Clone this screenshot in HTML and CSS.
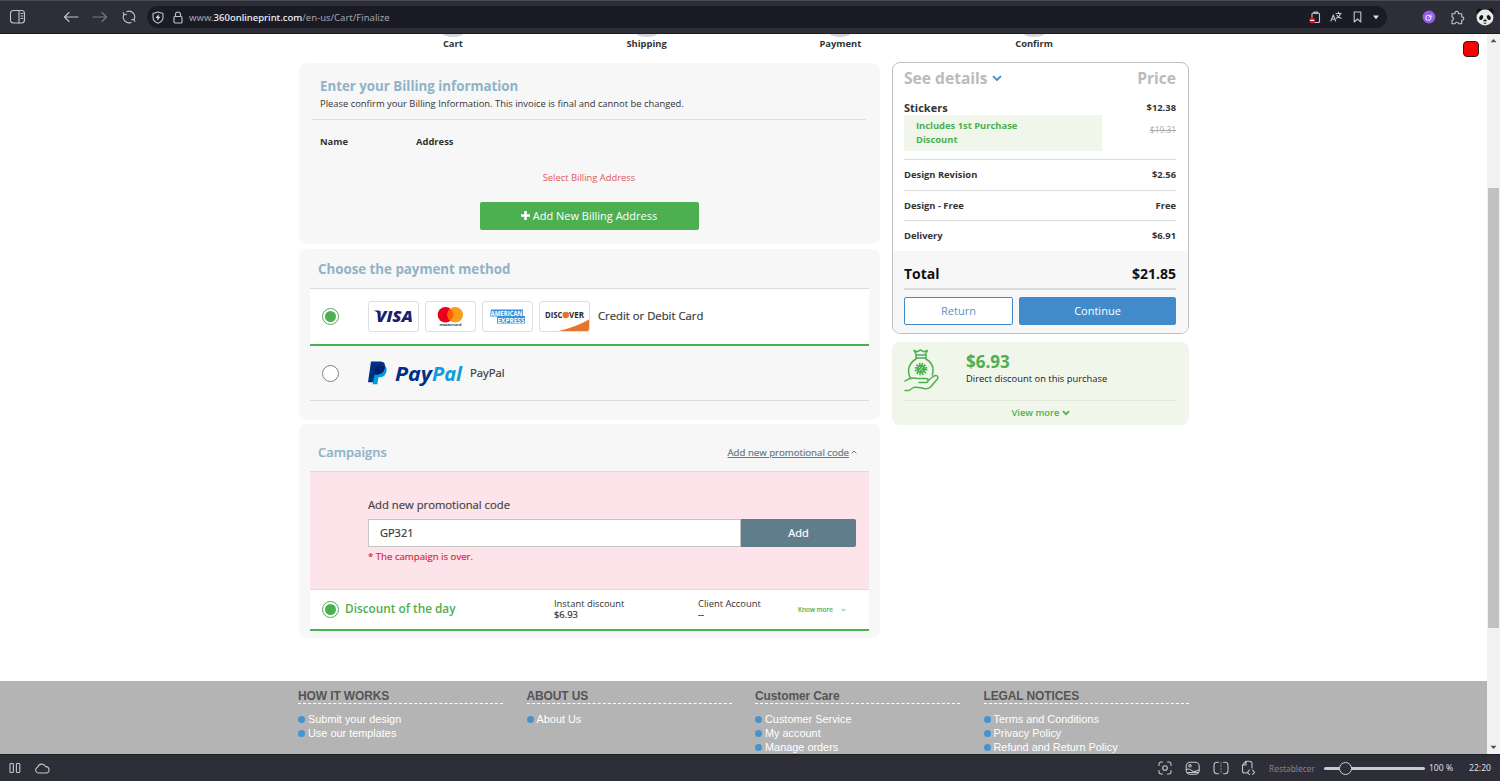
FILE: index.html
```html
<!DOCTYPE html>
<html lang="en">
<head>
    <meta charset="utf-8">
    <title>360onlineprint - Finalize</title>
    <link rel="stylesheet" href="styles.css">
</head>
<body>
    <header class="toolbar">
        <svg class="icon panel-icon" width="18" height="16" viewBox="0 0 18 16"><rect x="1.5" y="1.5" width="14" height="12.5" rx="3"/><path d="M10 1.5V14M12 4.5h2M12 7h2M12 9.5h2"/></svg>
        <svg class="icon back-icon" width="16" height="12" viewBox="0 0 16 12"><path d="M15 6H1.5M6 1.5L1.5 6L6 10.5"/></svg>
        <svg class="icon forward-icon" width="16" height="12" viewBox="0 0 16 12"><path d="M1 6h13.5M10 1.5L14.5 6L10 10.5"/></svg>
        <svg class="icon reload-icon" width="14" height="14" viewBox="0 0 14 14"><path d="M5 1.6A5.6 5.6 0 0 1 12 9.5M9 12.4A5.6 5.6 0 0 1 2 4.5M1.2 2.6L2 4.6L4.2 4.4M12.8 11.4L12 9.4L9.8 9.6"/></svg>
        <div class="address-bar">
            <svg class="icon" width="12" height="13" viewBox="0 0 12 13"><path d="M6 1L11 2.5V6.5C11 9.5 8.5 11.3 6 12.2C3.5 11.3 1 9.5 1 6.5V2.5Z"/><path class="solid" d="M6.8 3L3.6 7H5.6L5.2 9.8L8.4 5.8H6.4Z"/></svg>
            <svg class="icon lock-icon" width="10" height="13" viewBox="0 0 10 13"><rect x="1" y="5.5" width="8" height="6.5" rx="1"/><path d="M2.5 5.5V3.5a2.5 2.5 0 0 1 5 0v2"/></svg>
            <span class="url">www.<b>360onlineprint.com</b>/en-us/Cart/Finalize</span>
            <svg class="icon" width="12" height="13" viewBox="0 0 12 13"><rect x="3" y="2" width="7.5" height="9.5" rx="1"/><path d="M5 2V1h3.5v1.5H5"/><circle cx="3.2" cy="9.4" r="3" fill="#d80b18" stroke="none"/><path d="M1.7 9.4h3" stroke="#fff" stroke-width="1.2"/></svg>
            <svg class="icon translate-icon" width="12" height="12" viewBox="0 0 12 12"><path d="M1 10L3.3 4L5.6 10M1.8 8.2h3M6 2.5h5.2M8.6 1v1.5M10.5 2.5C10 5 8 6.5 6.3 7.2M7 4.2C8 5.8 9.5 6.8 11.2 7.2"/></svg>
            <svg class="icon bookmark-icon" width="9" height="12" viewBox="0 0 9 12"><path d="M1.2 1h6.6v10L4.5 8L1.2 11Z"/></svg>
            <svg class="icon caret-icon" width="8" height="5" viewBox="0 0 8 5"><path class="solid" d="M1 .5h6L4 4.2Z"/></svg>
        </div>
        <svg class="ext-icon" width="14" height="14" viewBox="0 0 14 14"><circle cx="7" cy="7" r="6.4" fill="#8f5fe8"/><circle cx="6.3" cy="7.8" r="2.5" fill="none" stroke="#e5d9ff" stroke-width="1.1"/><path d="M6.3 7.8L9.8 4.4M8.5 7.2L10.6 6" stroke="#e5d9ff" fill="none"/></svg>
        <svg class="icon puzzle-icon" width="15" height="15" viewBox="0 0 15 15"><path d="M2 3.7h3a1.8 1.8 0 1 1 3.4 0h3.3v3.2a1.7 1.7 0 1 1 0 3.3v3.5H8.6a1.8 1.8 0 0 0-3.5 0H2v-3.3a1.8 1.8 0 0 0 0-3.5Z"/></svg>
        <svg class="panda" width="18" height="18" viewBox="0 0 18 18"><circle cx="3.5" cy="3.5" r="3" fill="#111"/><circle cx="14.5" cy="3.5" r="3" fill="#111"/><ellipse cx="9" cy="9.5" rx="8.4" ry="7.9" fill="#e9ebe9"/><ellipse cx="5.2" cy="9.5" rx="1.8" ry="2.6" transform="rotate(30 5.2 9.5)" fill="#151515"/><ellipse cx="12.8" cy="9.5" rx="1.8" ry="2.6" transform="rotate(-30 12.8 9.5)" fill="#151515"/><ellipse cx="9" cy="12.5" rx="1.7" ry="1.1" fill="#151515"/><path d="M7.5 15q1.5.8 3 0" stroke="#333" fill="none"/></svg>
    </header>

    <div class="viewport">
        <main class="page">
            <div class="marker"></div>
            <div class="steps">
                <div class="step">Cart</div>
                <div class="step">Shipping</div>
                <div class="step">Payment</div>
                <div class="step">Confirm</div>
            </div>

            <div class="content">
                <div class="left">
                    <section class="card billing">
                        <h2>Enter your Billing information</h2>
                        <p class="note">Please confirm your Billing Information. This invoice is final and cannot be changed.</p>
                        <div class="billing-head">
                            <span class="name">Name</span>
                            <span>Address</span>
                        </div>
                        <p class="billing-error">Select Billing Address</p>
                        <button class="btn-green"><svg width="9" height="9" viewBox="0 0 9 9"><path d="M4.5 0v9M0 4.5h9" stroke="#fff" stroke-width="2.6"/></svg><span>Add New Billing Address</span></button>
                    </section>

                    <section class="card payment">
                        <h2>Choose the payment method</h2>
                        <div class="method selected">
                            <span class="radio checked"></span>
                            <div class="logos">
                                <svg class="logo" viewBox="1 1 49 29"><path d="M6 9.5h5l2 4Z" fill="#1b1f71"/><text x="8" y="21.3" font-size="16" font-weight="800" font-style="italic" textLength="37" lengthAdjust="spacingAndGlyphs" fill="#1b1f71">VISA</text></svg>
                                <svg class="logo" viewBox="1 1 49 29"><circle cx="20.5" cy="13.7" r="7.8" fill="#eb001b"/><circle cx="30.2" cy="13.7" r="7.8" fill="#f79e1b"/><path d="M25.3 7.6a7.8 7.8 0 0 1 0 12.2a7.8 7.8 0 0 1 0-12.2" fill="#ff5f00"/><text x="14.5" y="25.3" font-size="4" font-weight="700" textLength="22" fill="#444">mastercard</text></svg>
                                <svg class="logo amex" viewBox="1 1 49 29"><path d="M9 8.5h32v6.5h2v7.5H15v-7H8Z" fill="#3c92dc"/><text x="8.5" y="14.5" font-size="6.6" font-weight="700" textLength="32" lengthAdjust="spacingAndGlyphs" fill="#fff">AMERICAN</text><text x="15.5" y="21.8" font-size="6.6" font-weight="700" textLength="27" lengthAdjust="spacingAndGlyphs" fill="#fff">EXPRESS</text></svg>
                                <svg class="logo" viewBox="1 1 49 29"><path d="M15 31Q36 27 51 18V31Z" fill="#e5752b"/><text x="6" y="17" font-size="8.6" font-weight="700" textLength="17.5" lengthAdjust="spacingAndGlyphs" fill="#2c2c30">DISC</text><circle cx="26.8" cy="14" r="3.3" fill="#e97228"/><text x="30" y="17" font-size="8.6" font-weight="700" textLength="15" lengthAdjust="spacingAndGlyphs" fill="#2c2c30">VER</text></svg>
                            </div>
                            <span class="method-name">Credit or Debit Card</span>
                        </div>
                        <div class="method">
                            <span class="radio"></span>
                            <svg class="paypal" width="95" height="26" viewBox="0 0 95 26"><path d="M6 8L16.5 5.5C19.5 7.5 19 11 17.5 14C16 16.8 13.5 17.3 10.5 17.3L9.3 24.3H4.7Z" fill="#009cde"/><path d="M3 1.5H11.5C16 1.5 17.6 3.5 16.8 7.5C16 12 13 14.5 8.5 14.5H6.5L5 22.3H0Z" fill="#012f86"/><path d="M7.5 6.3Q12 5 16.8 6.5C16.8 12 13 14.5 8.5 14.5H6.2Z" fill="#012169"/><text y="20.7" font-size="19" font-weight="700" font-style="italic"><tspan x="27" textLength="37" lengthAdjust="spacingAndGlyphs" fill="#012f86">Pay</tspan><tspan x="64" textLength="30" lengthAdjust="spacingAndGlyphs" fill="#129bdb">Pal</tspan></text></svg>
                            <span class="method-name">PayPal</span>
                        </div>
                    </section>

                    <section class="card campaigns">
                        <div class="campaigns-head">
                            <h2>Campaigns</h2>
                            <a class="promo-link">Add new promotional code</a>
                            <svg width="6" height="4" viewBox="0 0 6 4"><path d="M.6 3.4L3 1L5.4 3.4" fill="none" stroke="#607d8b"/></svg>
                        </div>
                        <div class="promo">
                            <label for="code">Add new promotional code</label>
                            <div class="promo-row">
                                <input type="text" id="code" value="GP321">
                                <button class="btn-add">Add</button>
                            </div>
                            <p class="promo-error">* The campaign is over.</p>
                        </div>
                        <div class="discount">
                            <span class="radio checked"></span>
                            <span class="discount-name">Discount of the day</span>
                            <div class="discount-col instant">Instant discount<br><b>$6.93</b></div>
                            <div class="discount-col client">Client Account<br><b>--</b></div>
                            <span class="know-more">Know more</span>
                            <svg width="5" height="4" viewBox="0 0 5 4"><path d="M.7 1L2.5 2.8L4.3 1" fill="none" stroke="#4caf50"/></svg>
                        </div>
                    </section>
                </div>

                <aside class="right">
                    <section class="summary">
                        <div class="summary-head">
                            <span>See details<svg width="10" height="7" viewBox="0 0 10 7"><path d="M1 1.2L5 5L9 1.2" fill="none" stroke="#428bca" stroke-width="1.8"/></svg></span>
                            <span>Price</span>
                        </div>
                        <div class="product">
                            <div>
                                <div class="product-name">Stickers</div>
                                <div class="product-tag">Includes 1st Purchase<br>Discount</div>
                            </div>
                            <div class="product-price">$12.38<s>$19.31</s></div>
                        </div>
                        <div class="line"><span>Design Revision</span><span>$2.56</span></div>
                        <div class="line"><span>Design - Free</span><span>Free</span></div>
                        <div class="line"><span>Delivery</span><span>$6.91</span></div>
                        <div class="summary-foot">
                            <div class="total"><span>Total</span><span>$21.85</span></div>
                            <div class="actions">
                                <button class="btn-return">Return</button>
                                <button class="btn-continue">Continue</button>
                            </div>
                        </div>
                    </section>

                    <section class="saving">
                        <div class="saving-top">
                            <svg width="35" height="43" viewBox="0 0 35 43" fill="none" stroke="#4caf50" stroke-width="1.5" stroke-linejoin="round"><g stroke-linecap="round"><path d="M12.5 6L10 1.5L13 2.8L16.5 1L20 2.8L23.5 1.5L21 6M12 6h10M12 9h10M12 6v3M22 6v3M12.5 9.5C7 13 4.5 17 4.5 22Q4.5 26 6.5 29M21.5 9.5C27 13 29.5 17 29 22Q29 24 28.3 26"/><path d="M1 32Q7 27.5 13 29.5H22C25 29.5 24.5 33.5 22 33.5H15M24.8 31L30 27C32.5 25.5 35 27.5 33.3 30L27 37.5C25.5 39.5 23 40 20 39.5C15 38.5 13 37.5 9.5 38.5L5 41.5H1"/></g><circle cx="17" cy="20" r="5.2" stroke-width="2.4" stroke-dasharray="1.5 1.22"/><circle cx="17" cy="20" r="4.4" fill="#4caf50" stroke="none"/><path d="M18.8 18L15.2 22M14.8 18.3h1M18.2 21.7h1" stroke="#f1f6ea" stroke-width=".7"/></svg>
                            <div>
                                <div class="saving-amount">$6.93</div>
                                <div class="saving-text">Direct discount on this purchase</div>
                            </div>
                        </div>
                        <div class="view-more">View more<svg width="8" height="6" viewBox="0 0 8 6"><path d="M1 1.2L4 4.2L7 1.2" fill="none" stroke="#4caf50" stroke-width="1.7"/></svg></div>
                    </section>
                </aside>
            </div>

            <footer class="footer">
                <div class="footer-col">
                    <h3>HOW IT WORKS</h3>
                    <ul>
                        <li>Submit your design</li>
                        <li>Use our templates</li>
                    </ul>
                </div>
                <div class="footer-col">
                    <h3>ABOUT US</h3>
                    <ul>
                        <li>About Us</li>
                    </ul>
                </div>
                <div class="footer-col">
                    <h3>Customer Care</h3>
                    <ul>
                        <li>Customer Service</li>
                        <li>My account</li>
                        <li>Manage orders</li>
                    </ul>
                </div>
                <div class="footer-col">
                    <h3>LEGAL NOTICES</h3>
                    <ul>
                        <li>Terms and Conditions</li>
                        <li>Privacy Policy</li>
                        <li>Refund and Return Policy</li>
                    </ul>
                </div>
            </footer>
        </main>

        <div class="scrollbar">
            <svg width="7" height="5" viewBox="0 0 7 5"><path d="M.5 4.2L3.5 1L6.5 4.2Z" fill="#505050"/></svg>
            <div class="thumb"></div>
            <svg width="7" height="5" viewBox="0 0 7 5"><path d="M.5 .8L3.5 4L6.5 .8Z" fill="#505050"/></svg>
        </div>
    </div>

    <div class="statusbar">
        <svg class="icon" width="12" height="12" viewBox="0 0 12 12"><rect x="1" y="1.5" width="3.4" height="9" rx=".8"/><rect x="7.4" y="1.5" width="3.4" height="9" rx=".8"/></svg>
        <svg class="icon cloud-icon" width="16" height="12" viewBox="0 0 16 12"><path d="M4 11a3 3 0 0 1-.3-5.8A4.2 4.2 0 0 1 11.6 4.6A3.2 3.2 0 0 1 12 11Z"/></svg>
        <svg class="icon capture-icon" width="14" height="14" viewBox="0 0 14 14"><path d="M1 4.5V3.2A2.2 2.2 0 0 1 3.2 1H4.5M9.5 1h1.3A2.2 2.2 0 0 1 13 3.2V4.5M13 9.5v1.3A2.2 2.2 0 0 1 10.8 13H9.5M4.5 13H3.2A2.2 2.2 0 0 1 1 10.8V9.5"/><circle cx="7" cy="7" r="2.3"/></svg>
        <svg class="icon image-icon" width="16" height="15" viewBox="0 0 16 15"><rect x="1.2" y="1.2" width="13" height="12" rx="4"/><path d="M1.5 8.5C5 6.5 6.5 10 8.5 10.5S12.5 9 14 9M2.5 11.5h11"/><circle cx="5" cy="4.8" r="1.2"/></svg>
        <svg class="icon tile-icon" width="16" height="14" viewBox="0 0 16 14"><path d="M5.5 1.2H4A3 3 0 0 0 1 4.2v5.6a3 3 0 0 0 3 3h1.5M10.5 1.2H12a3 3 0 0 1 3 3v5.6a3 3 0 0 1-3 3h-1.5"/><path d="M8 1v12" stroke-dasharray="1.5 1.5" opacity=".5"/></svg>
        <svg class="icon code-icon" width="15" height="16" viewBox="0 0 15 16"><path d="M6 13H3.5A2 2 0 0 1 1.5 11V5L5 1.2h3.5A2.5 2.5 0 0 1 11 3.7V8M5 1.5V5H1.8M8.5 10L6.5 12.3L8.5 14.5M11.5 10l2 2.3l-2 2.2"/></svg>
        <span class="reset">Restablecer</span>
        <div class="slider"><div class="knob"></div></div>
        <span class="zoom">100 %</span>
        <span class="clock">22:20</span>
    </div>
</body>
</html>
```

FILE: styles.css
```css
* {
    box-sizing: border-box;
}

body {
    margin: 0;
    height: 781px;
    overflow: hidden;
    display: flex;
    flex-direction: column;
    font-family: "Open Sans", sans-serif;
    font-size: 9.4px;
    color: #333;
    background: #fff;
}

h2, h3, p, ul {
    margin: 0;
    padding: 0;
}

svg {
    flex: none;
    display: block;
}

button, input {
    font-family: inherit;
    padding: 0;
    border: 0;
}

/* Browser toolbar */
.toolbar {
    height: 34px;
    flex: none;
    display: flex;
    align-items: center;
    padding: 0 6px 0 9px;
    background: #2e2e38;
    border-top: 1px solid #4b4b54;
    border-bottom: 1px solid #1b1b23;
}

.icon {
    fill: none;
    stroke: #c3c3cb;
    stroke-width: 1.1;
    stroke-linecap: round;
    stroke-linejoin: round;
}

.icon .solid {
    fill: #e2e2e8;
    stroke: none;
}

.back-icon {
    margin-left: 36px;
}

.forward-icon {
    margin-left: 13px;
    opacity: 0.5;
}

.reload-icon {
    margin-left: 14px;
}

.address-bar {
    width: 1240px;
    height: 22px;
    margin-left: 11px;
    padding: 0 7px 0 5px;
    display: flex;
    align-items: center;
    border-radius: 11px;
    background: #1b1b25;
}

.lock-icon {
    margin-left: 9px;
}

.url {
    flex: 1;
    margin-left: 6px;
    font-family: "Noto Sans", sans-serif;
    font-size: 9.5px;
    color: #a4a4ad;
}

.url b {
    font-weight: 500;
    color: #f3f3f6;
}

.translate-icon {
    margin-left: 9px;
}

.bookmark-icon {
    margin-left: 11px;
}

.caret-icon {
    margin-left: 10px;
}

.ext-icon {
    margin-left: 35px;
}

.puzzle-icon {
    margin-left: 14px;
}

.panda {
    margin-left: 11px;
}

/* Page */
.viewport {
    height: 720px;
    flex: none;
    display: flex;
}

.page {
    position: relative;
    width: 1487px;
    overflow: hidden;
    display: flex;
    flex-direction: column;
}

.marker {
    position: absolute;
    top: 7px;
    left: 1463px;
    width: 16px;
    height: 16px;
    border: 1px solid #222;
    border-radius: 4px;
    background: #f00;
}

.steps {
    display: flex;
    width: 775px;
    margin-left: 356px;
    height: 29px;
    flex: none;
}

.step {
    flex: 1;
    text-align: center;
    font-weight: 700;
    line-height: 14px;
}

/* bottom edge of the step circle */
.step::before {
    content: "";
    display: block;
    width: 20px;
    height: 2.5px;
    margin: 0 auto;
    border-radius: 0 0 10px 10px / 0 0 3px 3px;
    background: #d4d4da;
}

.content {
    display: flex;
    gap: 12px;
    padding-left: 299px;
    height: 618px;
    flex: none;
}

.left {
    width: 581px;
}

.right {
    width: 297px;
    margin-top: -1px;
}

h2 {
    font-size: 13.3px;
    line-height: 18px;
    font-weight: 700;
    color: #8fb3c7;
}

.card {
    border-radius: 8px;
    background: #f7f7f7;
}

.billing {
    height: 181px;
    padding: 14px 14px 0 13px;
}

.billing h2,
.note {
    padding-left: 8px;
}

.note {
    height: 26px;
    padding-top: 3px;
    line-height: 14px;
    margin-top: -1px;
    border-bottom: 1px solid #dcdfe1;
}

.billing-head {
    display: flex;
    padding: 13px 8px 0;
    font-weight: 700;
    line-height: 18px;
}

.billing-head .name {
    width: 96px;
}

.billing-error {
    margin-top: 18px;
    line-height: 18px;
    text-align: center;
    color: #e05a5a;
}

.btn-green {
    display: flex;
    align-items: center;
    justify-content: center;
    gap: 3px;
    width: 219px;
    height: 28px;
    margin: 15px auto 0;
    padding-bottom: 1px;
    border-radius: 2px;
    background: #4caf50;
    color: #fff;
    font-size: 11px;
}

.payment {
    height: 171px;
    margin-top: 5px;
    padding: 11px 11px 0;
}

.payment h2 {
    height: 29px;
    padding-left: 8px;
    border-bottom: 1px solid #d8dce0;
}

.method {
    display: flex;
    align-items: center;
    height: 55px;
    padding-left: 12px;
    border-bottom: 1px solid #d8dce0;
}

.method.selected {
    height: 57px;
    padding-bottom: 1px;
    border-bottom: 2px solid #4caf50;
    background: #fff;
}

.radio {
    flex: none;
    width: 17px;
    height: 17px;
    border: 1px solid #7b8287;
    border-radius: 50%;
    background: #fff;
}

.radio.checked {
    padding: 2px;
    border-color: #4caf50;
}

.radio.checked::before {
    content: "";
    display: block;
    width: 11px;
    height: 11px;
    border-radius: 50%;
    background: #4caf50;
}

.logos {
    display: flex;
    gap: 6px;
    margin-left: 29px;
}

.logo {
    width: 51px;
    height: 31px;
    border: 1px solid #dcdfe2;
    border-radius: 3px;
}

.method-name {
    margin: -2px 0 0 8px;
    font-size: 11.3px;
    color: #3a3a3a;
    -webkit-text-stroke: 0.2px;
}

.paypal {
    margin-left: 29px;
}

.paypal + .method-name {
    margin-left: 7px;
}

.campaigns {
    height: 214px;
    margin-top: 4px;
    padding: 0 11px;
}

.campaigns-head {
    height: 48px;
    display: flex;
    align-items: center;
    padding: 9px 12px 0 8px;
    border-bottom: 1px solid #d8dce0;
}

.campaigns-head h2 {
    font-size: 12.9px;
    font-weight: 600;
    -webkit-text-stroke: 0.2px;
}

.promo-link {
    margin-left: auto;
    margin-right: 2px;
    font-size: 9.65px;
    color: #607d8b;
    text-decoration: underline;
    -webkit-text-stroke: 0.2px;
}

.promo {
    height: 118px;
    padding: 24px 13px 0 58px;
    border-bottom: 1px solid #ecd5da;
    background: #fce4ea;
}

.promo label {
    display: block;
    height: 23px;
    line-height: 18px;
    font-size: 11.25px;
    color: #444;
    -webkit-text-stroke: 0.2px;
}

.promo-row {
    display: flex;
    height: 28px;
}

.promo-row input {
    width: 373px;
    padding: 0 0 1px 11px;
    border: 1px solid #c5c5c5;
    font-size: 11px;
    color: #333;
    -webkit-text-stroke: 0.2px;
}

.btn-add {
    flex: 1;
    padding-bottom: 1px;
    border-radius: 0 2px 2px 0;
    background: #607d8b;
    color: #fff;
    font-size: 11px;
    -webkit-text-stroke: 0.2px;
}

.promo-error {
    margin-top: 2px;
    line-height: 16px;
    font-size: 9.65px;
    color: #dc2a38;
    -webkit-text-stroke: 0.2px;
}

.discount {
    display: flex;
    align-items: center;
    height: 41px;
    padding: 0 23px 0 12px;
    border-bottom: 2px solid #4caf50;
    background: #fff;
}

.discount-name {
    width: 209px;
    margin: -3px 0 0 6px;
    font-size: 11.8px;
    font-weight: 600;
    color: #4caf50;
}

.discount-col {
    margin-top: -1px;
    line-height: 11.5px;
}

.discount-col b {
    font-weight: 400;
    -webkit-text-stroke: 0.2px;
}

.instant {
    width: 144px;
}

.client {
    width: 100px;
}

.know-more {
    flex: 1;
    font-size: 6.5px;
    color: #4caf50;
    -webkit-text-stroke: 0.2px;
}

/* Order summary */
.summary {
    height: 272px;
    overflow: hidden;
    border: 1px solid #bfc0c2;
    border-radius: 8px;
    font-weight: 700;
}

.summary-head,
.product,
.line,
.total {
    display: flex;
    justify-content: space-between;
}

.summary-head {
    padding: 4px 12px 0 11px;
    line-height: 22px;
    font-size: 15.6px;
    color: #b9bbbe;
}

.summary-head svg {
    display: inline-block;
    margin-left: 4px;
    vertical-align: 2px;
}

.product {
    height: 71px;
    margin: 0 12px 0 11px;
    padding-top: 11px;
    border-bottom: 1px solid #dadcde;
}

.product-name {
    height: 15px;
    line-height: 16px;
    font-size: 11px;
}

.product-tag {
    width: 198px;
    height: 36px;
    padding: 4px 12px;
    line-height: 14px;
    color: #4caf50;
    background: #f1f6ea;
}

.product-price {
    line-height: 16px;
    text-align: right;
}

.product-price s {
    display: block;
    margin-top: 6px;
    font-size: 8.3px;
    font-weight: 400;
    color: #aaa;
}

.line {
    margin: 0 12px 0 11px;
    line-height: 29.5px;
    border-bottom: 1px solid #dadcde;
}

.line:nth-last-child(2) {
    border-bottom: 0;
}

.summary-foot {
    height: 84px;
    padding: 8px 12px 0 11px;
    background: #f7f7f7;
}

.total {
    height: 31px;
    line-height: 30px;
    font-size: 14px;
    color: #111;
    border-bottom: 2px solid #dadcde;
}

.actions {
    display: flex;
    gap: 6px;
    margin-top: 7px;
}

.actions button {
    height: 28px;
    border: 1px solid #428bca;
    border-radius: 2px;
    font-size: 11px;
}

.actions .btn-return {
    width: 109px;
    background: #fff;
    color: #5b93c4;
}

.actions .btn-continue {
    flex: 1;
    background: #428bca;
    color: #fff;
}

.saving {
    height: 83px;
    margin-top: 8px;
    padding: 7px 12px 0;
    border-radius: 8px;
    background: #f1f6ea;
}

.saving-top {
    display: flex;
    gap: 27px;
    height: 52px;
    border-bottom: 1px solid #e4e9dd;
}

.saving-amount {
    padding-top: 3px;
    line-height: 20px;
    font-size: 17px;
    font-weight: 700;
    color: #4caf50;
}

.saving-text {
    line-height: 14px;
    color: #222;
}

.view-more {
    display: flex;
    align-items: center;
    justify-content: center;
    gap: 2px;
    height: 23px;
    font-weight: 600;
    color: #4caf50;
}

/* Footer */
.footer {
    flex: 1;
    display: flex;
    gap: 23.5px;
    padding: 8px 0 0 298px;
    background: #b4b4b4;
    font-family: "Liberation Sans", Arial, sans-serif;
}

.footer-col {
    width: 205px;
}

.footer h3 {
    height: 15px;
    line-height: 14px;
    font-size: 12px;
    font-weight: 700;
    letter-spacing: -0.12px;
    color: #555;
    border-bottom: 1px dashed #fff;
}

.footer ul {
    margin-top: 8px;
    list-style: none;
}

.footer li {
    display: flex;
    align-items: center;
    gap: 3px;
    height: 14px;
    font-size: 10.9px;
    color: #fff;
    white-space: nowrap;
}

.footer li::before {
    content: "";
    width: 7px;
    height: 7px;
    margin-top: 1px;
    border-radius: 50%;
    background: #4594cf;
}

.scrollbar {
    width: 13px;
    padding: 4px 0;
    display: flex;
    flex-direction: column;
    align-items: center;
    justify-content: space-between;
    background: #f1f1f1;
}

.thumb {
    width: 11px;
    height: 440px;
    margin-top: 28px;
    background: #c1c1c1;
}

/* Browser status bar */
.statusbar {
    height: 27px;
    flex: none;
    display: flex;
    align-items: center;
    padding: 0 9px;
    border-top: 1px solid #1b1b23;
    background: #2e2e38;
    font-family: "Noto Sans", sans-serif;
    font-size: 8.6px;
    color: #dedee4;
}

.cloud-icon {
    margin-left: 13px;
}

.capture-icon {
    margin-left: auto;
}

.image-icon {
    margin-left: 13px;
}

.tile-icon {
    margin-left: 12px;
}

.code-icon {
    margin-left: 12px;
}

.reset {
    margin-left: 13px;
    font-size: 8.4px;
    color: #84848e;
}

.slider {
    position: relative;
    width: 101px;
    height: 3px;
    margin-left: 9px;
    border-radius: 2px;
    background: #c9c9d1;
}

.knob {
    position: absolute;
    left: 15px;
    top: -5px;
    width: 13px;
    height: 13px;
    border: 1px solid #d0d0d8;
    border-radius: 50%;
    background: #2e2e38;
}

.zoom {
    margin-left: 4px;
}

.clock {
    margin-left: 16px;
}
```
